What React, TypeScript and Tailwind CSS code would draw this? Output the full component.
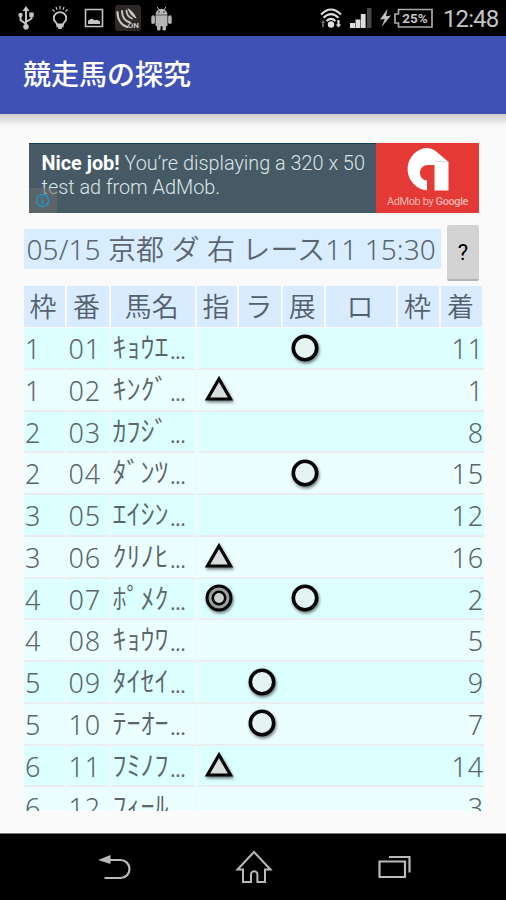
import clsx from "clsx";

type Mark = "circle" | "double" | "triangle";

type Horse = {
  frame: number;
  no: string;
  name: string;
  marks?: { index?: Mark; lap?: Mark; pace?: Mark };
  rank: number;
};

const columns = ["枠", "番", "馬名", "指", "ラ", "展", "ロ", "枠", "着"];

const gridCols =
  "grid grid-cols-[43px_44px_86.5px_42px_43.500px_43.500px_72px_43px_43px]";

const horses: Horse[] = [
  { frame: 1, no: "01", name: "ｷｮｳｴ...", marks: { pace: "circle" }, rank: 11 },
  { frame: 1, no: "02", name: "ｷﾝｸﾞ...", marks: { index: "triangle" }, rank: 1 },
  { frame: 2, no: "03", name: "ｶﾌｼﾞ...", rank: 8 },
  { frame: 2, no: "04", name: "ﾀﾞﾝﾂ...", marks: { pace: "circle" }, rank: 15 },
  { frame: 3, no: "05", name: "ｴｲｼﾝ...", rank: 12 },
  { frame: 3, no: "06", name: "ｸﾘﾉﾋ...", marks: { index: "triangle" }, rank: 16 },
  {
    frame: 4,
    no: "07",
    name: "ﾎﾟﾒｸ...",
    marks: { index: "double", pace: "circle" },
    rank: 2,
  },
  { frame: 4, no: "08", name: "ｷｮｳﾜ...", rank: 5 },
  { frame: 5, no: "09", name: "ﾀｲｾｲ...", marks: { lap: "circle" }, rank: 9 },
  { frame: 5, no: "10", name: "ﾃｰｵｰ...", marks: { lap: "circle" }, rank: 7 },
  { frame: 6, no: "11", name: "ﾌﾐﾉﾌ...", marks: { index: "triangle" }, rank: 14 },
  { frame: 6, no: "12", name: "ﾌｨｰﾙ", rank: 3 },
];

function StatusBar() {
  return (
    <header className="flex h-9 shrink-0 items-center bg-black pl-[17px] text-[#c4c4c4]">
      {/* USB */}
      <svg width="18" height="24" viewBox="0 0 18 24" fill="none" stroke="currentColor" strokeWidth="2">
        <path d="M9 4v16M9 18L3.500 14V9M9 16l5.500-3.500V7" />
        <path d="M9 0l3.500 5h-7z" fill="currentColor" stroke="none" />
        <circle cx="3.500" cy="9" r="2.200" fill="currentColor" stroke="none" />
        <path d="M12.300 6.500h4.400v4.400h-4.400z" fill="currentColor" stroke="none" />
        <circle cx="9" cy="20.700" r="2.800" fill="currentColor" stroke="none" />
      </svg>
      {/* light bulb */}
      <svg className="ml-[16px]" width="18" height="24" viewBox="0 0 18 24" fill="none" stroke="currentColor" strokeWidth="1.900">
        <path d="M6 18.500c0-2-3.200-2.500-3.200-6.200a6.200 6.200 0 0 1 12.400 0c0 3.700-3.200 4.200-3.200 6.200z" />
        <path d="M5.500 18.500h7v2.800H10.800V23H7.200v-1.700H5.500z" fill="currentColor" stroke="none" />
        <path d="M9 0v3.500M5 1l1 2.700M13 1l-1 2.700M1.500 3.500l2 2M16.500 3.500l-2 2" strokeWidth="1.200" />
      </svg>
      {/* picture */}
      <svg className="ml-[15px]" width="20" height="20" viewBox="0 0 20 20" fill="none">
        <path d="M1.500 1.500h17v17h-17z" stroke="currentColor" strokeWidth="1.600" />
        <path d="M4 16v-3.200l3.500-2.300 3 1.800 2.500-.6 3 1.600V16z" fill="currentColor" />
      </svg>
      {/* touch reader on */}
      <span className="relative ml-[11px] h-[26px] w-[26px] rounded-[3px] bg-[#2e2927]">
        <svg width="26" height="26" viewBox="0 0 26 26" fill="none" stroke="currentColor" strokeLinecap="round">
          <path d="M2.500 7c0 8 4 13.500 10 15" strokeWidth="2.200" />
          <path d="M7 6c0 6 3 10 8 11.500" strokeWidth="2" />
          <path d="M11.500 5.500c0 3.500 2 6.500 5.500 8" strokeWidth="1.800" />
          <path d="M12.500 3c3 1.500 7.500 5.500 9 10.500-3.500-1-7.500-5-9-10.500z" fill="currentColor" stroke="none" />
        </svg>
        <span className="absolute right-[2px] bottom-[1px] font-[Roboto] text-[8px] leading-[8px] font-bold">
          ON
        </span>
      </span>
      {/* android */}
      <svg className="ml-[10px]" width="21" height="25" viewBox="0 0 21 25" fill="#b5b5b5">
        <path d="M4.500 8.700a6 6 0 0 1 12 0zM4.500 9.300h12V19q0 1.200-1.200 1.200H5.700q-1.200 0-1.200-1.200z" />
        <rect x="0.300" y="9.300" width="3.600" height="8.700" rx="1.800" />
        <rect x="17.100" y="9.300" width="3.600" height="8.700" rx="1.800" />
        <rect x="6" y="17" width="3.600" height="7.500" rx="1.600" />
        <rect x="11.400" y="17" width="3.600" height="7.500" rx="1.600" />
        <path d="M6 .8l2 3M15 .8l-2 3" stroke="#b5b5b5" strokeWidth="1" />
        <circle cx="8" cy="6" r=".7" fill="#000" />
        <circle cx="13" cy="6" r=".7" fill="#000" />
      </svg>

      {/* wifi */}
      <svg className="ml-auto" width="22" height="21" viewBox="0 0 22 21" fill="none" stroke="#dedede" strokeWidth="2">
        <path d="M1 6.500Q11-3.500 21 6.500M3.500 9.800Q11 2.500 18.500 9.800M6.500 13q4.500-4.200 9 0" />
        <circle cx="11" cy="16.500" r="3.200" fill="#dedede" stroke="none" />
        <path d="M3 12l2.300 3H4v4H2v-4H.8z" fill="#666" stroke="none" />
        <path d="M18.500 19.500l-2.800-3h1.700V12h2.200v4.500h1.700z" fill="#dedede" stroke="none" />
      </svg>
      {/* signal */}
      <svg className="ml-[8px]" width="22" height="20" viewBox="0 0 22 20" fill="#dedede">
        <path d="M0 15h5v5H0zM5.500 11.500h4.800V20H5.500zM10.800 6h4.800v14h-4.800z" />
        <path d="M17 0h4.500v20H17z" fill="#484848" />
      </svg>
      {/* charging */}
      <svg className="ml-[8px]" width="11" height="18" viewBox="0 0 11 18" fill="currentColor">
        <path d="M7.500 0L0 10.500l4.800-.5L1.500 18 11 6.500l-5 .7z" />
      </svg>
      <span className="relative ml-[3px] flex h-[21px] w-[39px] items-center justify-center font-[Roboto] text-[13.500px] font-bold">
        <svg className="absolute inset-0" width="39" height="21" viewBox="0 0 39 21" fill="none" stroke="#aaa" strokeWidth="1.700">
          <path d="M4.500 1.500H38v17.500H4.500v-4H1V6h3.500z" />
        </svg>
        <span className="pl-[3px]">25%</span>
      </span>
      <time className="mr-[7px] ml-[10px] w-[56px] pt-[1px] font-[Roboto] text-[24px] leading-9 tracking-[-0.900px] whitespace-nowrap">
        12:48
      </time>
    </header>
  );
}

function AdBanner() {
  return (
    <section className="relative ml-[28.500px] flex h-[70px] w-[450.500px] font-[Roboto]">
      <p className="w-[347.500px] border-t border-[#123c50] bg-[#455a64] pt-[8px] pl-[13px] text-[19.850px] leading-[24px] font-light whitespace-nowrap text-[#dce4e8]">
        <b className="font-bold text-white">Nice job!</b> You’re displaying a 320 x 50
        <br />
        test ad from AdMob.
      </p>
      <div className="flex flex-1 flex-col items-center bg-[#e53935] text-[#f8b5b3]">
        <svg className="mt-[4px] mr-[2px]" width="44" height="44" viewBox="0 0 44 44" fill="#fff">
          <path d="M22 43.500V33.500a7.300 7.300 0 0 1-7-7.500c0-4.800 3.500-8 8-8H43V14.500L30 3.500C26 1 22 .5 19 1.200A21.500 21.500 0 0 0 22 43.500z" />
          <path d="M29.500 14.500H43.500v29H29.500z" />
          <path d="M30 14.500h13" stroke="#ccc" strokeWidth=".8" />
        </svg>
        <span className="text-[11px] leading-[21px] tracking-[-0.400px] whitespace-nowrap">
          AdMob by <span className="font-medium">Google</span>
        </span>
      </div>
      <div className="absolute bottom-0 left-0 flex h-[25px] w-[28px] items-center justify-center bg-[#6b6b6b]/60">
        <svg width="15" height="15" viewBox="0 0 15 15" fill="none" stroke="#2591c5" strokeWidth="1.700">
          <circle cx="7.500" cy="7.500" r="6" />
          <path d="M7.500 6.500v5M7.500 3.500v1.700" />
        </svg>
      </div>
    </section>
  );
}

function MarkIcon({ mark }: { mark?: Mark }) {
  if (!mark) return null;
  return (
    <svg
      className="drop-shadow-[1px_2px_1.500px_rgba(0,0,0,0.5)]"
      width="32"
      height="32"
      viewBox="0 0 32 32"
      fill="none"
      stroke="#050505"
      strokeWidth="3.600"
    >
      {mark === "circle" && <circle cx="16" cy="15" r="11.700" fill="#e6f3f3" />}
      {mark === "double" && (
        <>
          <circle cx="16" cy="15" r="12" fill="#9a9d9d" strokeWidth="3" />
          <circle cx="16" cy="15" r="6.200" fill="#c9d0d0" strokeWidth="2.600" />
        </>
      )}
      {mark === "triangle" && <path d="M16 5L27.500 25h-23z" fill="#d8dddd" strokeWidth="3.200" />}
    </svg>
  );
}

function HorseRow({ horse, odd }: { horse: Horse; odd: boolean }) {
  const { frame, no, name, marks, rank } = horse;
  const textCell = "border-r-2 border-[#eefbfb] whitespace-nowrap";
  const markCell = "flex items-center justify-center border-l-2";
  const kana = name.replace("...", "");
  return (
    <div
      className={clsx(
        gridCols,
        "h-[41.770px] border-b-2 border-[#eaecee] leading-[41px]",
        odd ? "bg-[#dcffff]" : "bg-[#ecffff]"
      )}
    >
      <span className={clsx(textCell, "pl-[1.500px]")}>{frame}</span>
      <span className={clsx(textCell, "pl-[2px] tracking-[0.800px]")}>{no}</span>
      <span className={clsx(textCell, "pl-[2px]")}>
        <span className="align-[1px] text-[28px] leading-[39px]">{kana}</span>
        {kana !== name && <span className="pl-px tracking-[-1.500px]">...</span>}
      </span>
      <span className={clsx(markCell, "border-[#eefbfb]")}>
        <MarkIcon mark={marks?.index} />
      </span>
      <span className={clsx(markCell, "border-transparent")}>
        <MarkIcon mark={marks?.lap} />
      </span>
      <span className={clsx(markCell, "border-transparent")}>
        <MarkIcon mark={marks?.pace} />
      </span>
      <span />
      <span />
      <span className="text-right tracking-[0.800px]">{rank}</span>
    </div>
  );
}

export default function App() {
  return (
    <div className="flex h-[900px] w-[506px] flex-col overflow-hidden bg-[#fafafa] font-['Noto_Sans','Noto_Sans_CJK_JP',sans-serif]">
      <StatusBar />
      <div className="flex h-[78px] shrink-0 items-center bg-[#3f51b5] pb-[2px] pl-[23px] text-[28px] text-white">
        <h1 className="font-medium">競走馬の探究</h1>
      </div>

      <main className="flex h-[719px] shrink-0 flex-col">
        <div className="mb-[17px] h-3 shrink-0 bg-linear-to-b from-[#cdcaca] to-[#fafafa]" />
        <AdBanner />

        <div className="mt-[12px] flex h-[56px] shrink-0 items-center gap-[6px] pl-[23.500px]">
          <p className="mb-[8px] h-[40px] w-[417.500px] bg-[#d8edff] pl-[3px] text-[28px] leading-[41px] font-[350] tracking-[0.080px] whitespace-nowrap text-[#5b656e]">
            05/15 京都 ダ 右 レース11 15:30
          </p>
          <button className="h-[56px] w-[32px] rounded-[2px] border-b-2 border-[#b5b5b5] bg-[#d3d3d3] font-[Roboto] text-[22px] text-black">
            ?
          </button>
        </div>

        <section className="mt-[5px] ml-[23.500px] w-[460px] overflow-hidden text-[27px] font-[350] text-[#5b6568]">
          <div className={clsx(gridCols, "h-[42px] text-[27px] text-[#53616d]")}>
            {columns.map((label, i) => (
              <span
                key={i}
                className="mr-[2px] mb-[2px] bg-[#d8ebff] pr-[2px] text-center leading-[41px]"
              >
                {label}
              </span>
            ))}
          </div>
          <div className="h-[483px] overflow-hidden">
            {horses.map((horse, i) => (
              <HorseRow key={horse.no} horse={horse} odd={i % 2 === 0} />
            ))}
          </div>
        </section>
      </main>

      <nav className="flex h-[67px] shrink-0 items-center border-t border-[#777] bg-black text-[#b9b9b9]">
        <svg className="ml-[98px]" width="33" height="26" viewBox="0 0 33 26" fill="none" stroke="currentColor" strokeWidth="2.200">
          <path d="M10 6h12.500a9 9 0 0 1 0 18H6.500" />
          <path d="M0 6l12.500-5v9z" fill="currentColor" stroke="none" />
        </svg>
        <svg className="ml-[104px]" width="38" height="34" viewBox="0 0 38 34" fill="none" stroke="currentColor" strokeWidth="2">
          <path d="M19 2L2.500 19.500H8V32h8v-7.500a3.200 3.200 0 0 1 6.400 0V32H30V19.500h5.500z" />
        </svg>
        <svg className="ml-[105px]" width="33" height="24" viewBox="0 0 33 24" fill="none" stroke="currentColor" strokeWidth="2.200">
          <path d="M1.500 6.500H27v15.500H1.500z" />
          <path d="M11 2h20.500v15.500" />
        </svg>
      </nav>
    </div>
  );
}
